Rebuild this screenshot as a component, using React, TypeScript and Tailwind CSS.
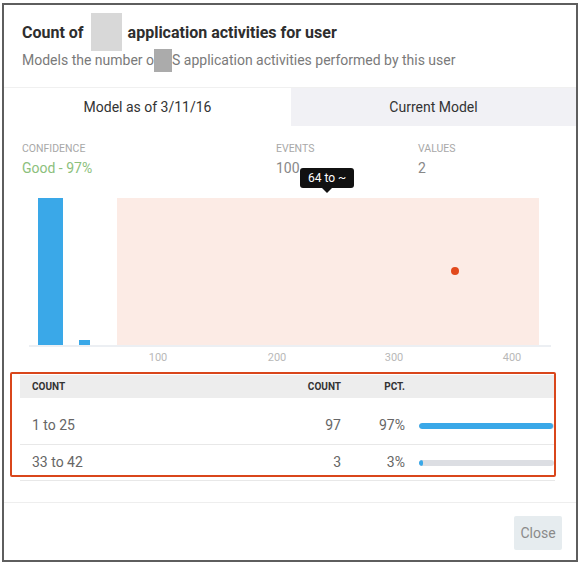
import React from 'react';

const rows = [
  { range: '1 to 25', count: 97, pct: 97 },
  { range: '33 to 42', count: 3, pct: 3 },
];

const ticks = [
  { x: 158, label: '100' },
  { x: 277, label: '200' },
  { x: 394, label: '300' },
  { x: 512, label: '400' },
];

function Chart() {
  return (
    <svg width={572} height={195} viewBox="4 177 572 195" className="block">
      {/* histogram bars */}
      <rect x={38} y={198} width={25} height={147} fill="#3aa8e8" />
      <rect x={79} y={340} width={11} height={5} fill="#3aa8e8" />
      {/* current range */}
      <rect x={117} y={198} width={422} height={147} fill="#fcebe5" />
      <circle cx={455} cy={271} r={4} fill="#e2491c" />
      {/* axis */}
      <line x1={29} y1={346} x2={551} y2={346} stroke="#e6eaef" strokeWidth={1.5} />
      {ticks.map((t) => (
        <text
          key={t.label}
          x={t.x}
          y={361}
          textAnchor="middle"
          fontSize={11}
          fill="#b8b8b8"
          fontFamily="Roboto, sans-serif"
        >
          {t.label}
        </text>
      ))}
    </svg>
  );
}

export default function App() {
  return (
    <div className="w-[583px] h-[568px] bg-white pt-[3px] pl-[2px]">
      <div
        className="relative w-[576px] h-[559px] border-2 border-[#5e5e5e] bg-white flex flex-col"
        style={{ fontFamily: 'Roboto, "Liberation Sans", sans-serif' }}
      >
        {/* Header */}
        <div className="px-[18px] pt-[17px] pb-[18px] border-b border-[#f0f0f0]">
          <h2 className="text-[16px] leading-[21px] font-bold text-[#2e2e2e] whitespace-nowrap">
            Count of
            <span className="relative inline-block ml-[7px] mr-[6px] w-[31px] h-[21px] align-top">
              <span className="absolute left-0 -top-[9px] w-[31px] h-[38px] bg-[#d8d8d8]" />
            </span>
            application activities for user
          </h2>
          <p className="mt-[8px] text-[14px] leading-[18px] text-[#7a7a7a] whitespace-nowrap">
            Models the number o
            <span className="relative inline-block w-[18px] h-[18px] align-top">
              <span className="absolute left-0 -top-[2px] w-[18px] h-[23px] bg-[#ababab]" />
            </span>
            S application activities performed by this user
          </p>
        </div>

        {/* Tabs */}
        <div className="flex h-[38px] text-[14px] text-[#333]">
          <div className="w-[287px] flex items-center justify-center bg-white">Model as of 3/11/16</div>
          <div className="flex-1 flex items-center justify-center bg-[#f1f1f5]">Current Model</div>
        </div>

        {/* Stats */}
        <div className="flex pl-[18px] pt-[16px]">
          <div className="w-[254px]">
            <div className="text-[10.5px] leading-[14px] uppercase text-[#a8a8a8]">Confidence</div>
            <div className="mt-[3px] text-[14px] leading-[18px] text-[#8cc07c]">Good - 97%</div>
          </div>
          <div className="w-[142px]">
            <div className="text-[10.5px] leading-[14px] uppercase text-[#a8a8a8]">Events</div>
            <div className="mt-[3px] text-[14px] leading-[18px] text-[#888]">100</div>
          </div>
          <div>
            <div className="text-[10.5px] leading-[14px] uppercase text-[#a8a8a8]">Values</div>
            <div className="mt-[3px] text-[14px] leading-[18px] text-[#888]">2</div>
          </div>
        </div>

        {/* Chart */}
        <div className="relative">
          <Chart />
          <div className="absolute left-[296px] -top-[9px] h-[20px] px-[8px] flex items-center rounded-[3px] bg-[#111] text-white text-[12px]">
            64 to ~
            <span className="absolute left-1/2 -translate-x-1/2 top-[20px] w-0 h-0 border-x-[5px] border-x-transparent border-t-[5px] border-t-[#111]" />
          </div>
        </div>

        {/* Table */}
        <div className="relative ml-[16px] mr-[21px] mt-[3px]">
          <div className="flex items-center h-[23px] bg-[#ededed] text-[10px] font-bold uppercase text-[#333]">
            <div className="w-[270px] pl-[12px]">Count</div>
            <div className="w-[51px] text-right">Count</div>
            <div className="w-[64px] text-right">Pct.</div>
          </div>
          {rows.map((r, i) => (
            <div
              key={r.range}
              className={`flex items-center border-b border-[#e8e8e8] text-[14px] text-[#666] ${
                i === 0 ? 'h-[47px] pt-[9px]' : 'h-[36px]'
              }`}
            >
              <div className="w-[270px] pl-[12px]">{r.range}</div>
              <div className="w-[51px] text-right">{r.count}</div>
              <div className="w-[64px] text-right">{r.pct}%</div>
              <div className="ml-[14px] w-[135px] h-[6px] rounded-[3px] bg-[#dcdee3] overflow-hidden">
                <div className="h-full rounded-[3px] bg-[#3aa8e8]" style={{ width: `${r.pct === 97 ? 99 : Math.max(r.pct, 3)}%` }} />
              </div>
            </div>
          ))}
          {/* highlight annotation */}
          <div className="absolute -left-[10px] -top-[3px] w-[546px] h-[105px] border-2 border-[#d9461b] rounded-[2px] pointer-events-none" />
        </div>

        {/* Footer */}
        <div className="mt-auto border-t border-[#eeeeee] flex justify-end pt-[13px] pb-[10px] pr-[14px]">
          <button className="w-[48px] h-[34px] rounded-[2px] bg-[#e6ecef] text-[14px] text-[#8a8a8a]">Close</button>
        </div>
      </div>
    </div>
  );
}
